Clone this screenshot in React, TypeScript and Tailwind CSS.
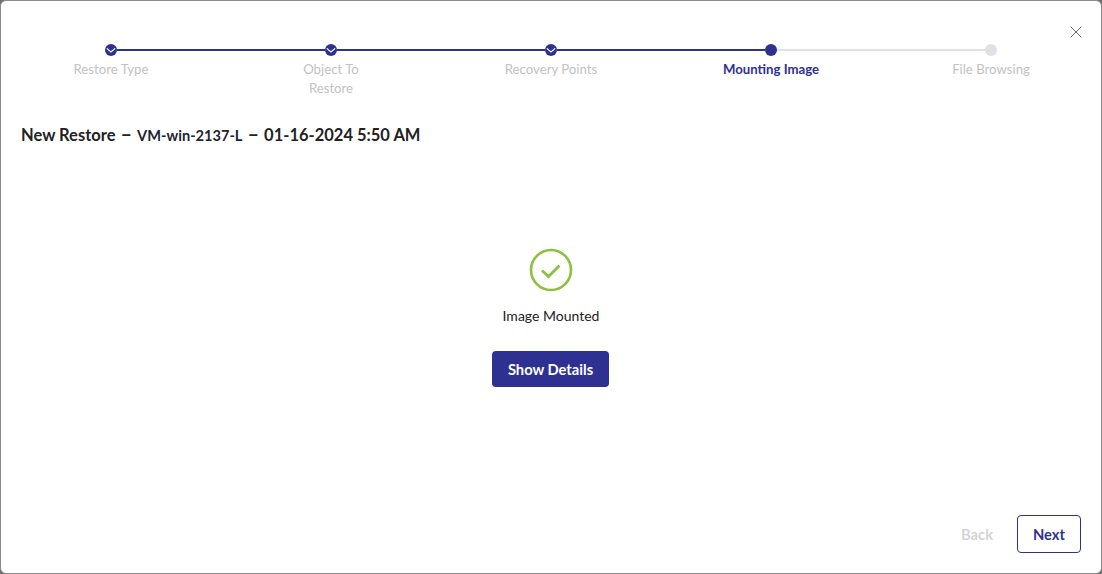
import React from "react";

const font = { fontFamily: '"Lato", "Noto Sans", sans-serif' };

const steps = [
  { label: "Restore Type", state: "done" },
  { label: "Object To Restore", state: "done" },
  { label: "Recovery Points", state: "done" },
  { label: "Mounting Image", state: "active" },
  { label: "File Browsing", state: "todo" },
];

function Dot({ state }: { state: string }) {
  if (state === "todo") return <div className="w-3 h-3 rounded-full bg-[#dfe1e6]" />;
  if (state === "active") return <div className="w-3 h-3 rounded-full bg-[#2e3192]" />;
  return (
    <svg width="12" height="12" viewBox="0 0 12 12" className="block">
      <circle cx="6" cy="6" r="6" fill="#2e3192" />
      <path d="M1.8 4.4 L6 8 L10.2 4.4" fill="none" stroke="#fff" strokeWidth="1.2" />
    </svg>
  );
}

export default function App() {
  return (
    <div className="w-[1102px] h-[574px] bg-[#6e6e6e] overflow-hidden" style={font}>
      <div className="relative w-full h-full bg-white border border-[#8a8a8a] rounded-[6px] flex flex-col">
        <button className="absolute top-[25px] right-[19px] text-[#6b6b6b]">
          <svg width="12" height="12" viewBox="0 0 12 12" className="block">
            <path d="M0.7 0.7 L11.3 11.3 M11.3 0.7 L0.7 11.3" stroke="currentColor" strokeWidth="1" fill="none" />
          </svg>
        </button>

        <div className="flex pt-[43px]">
          {steps.map((s, i) => (
            <div key={s.label} className="relative w-[220px] flex flex-col items-center">
              {i > 0 && (
                <div
                  className={`absolute top-[5px] left-[-104px] w-[208px] h-[2px] ${
                    s.state === "todo" ? "bg-[#dfe1e6]" : "bg-[#2e3192]"
                  }`}
                />
              )}
              <Dot state={s.state} />
              <div
                className={`mt-[4px] w-[120px] text-center text-[13.2px] leading-[19px] whitespace-pre-line ${
                  s.state === "active" ? "text-[#2e3192] font-bold" : "text-[#c2c2c2]"
                }`}
              >
                {s.label === "Object To Restore" ? "Object To\nRestore" : s.label}
              </div>
            </div>
          ))}
        </div>

        <div className="mt-[25px] ml-[20px] h-[24px] text-[16.5px] leading-[24px] font-bold text-[#222222]">
          New Restore <span className="mx-[1px] text-[20px] leading-none">–</span>{" "}
          <span className="text-[14.6px] text-[#1c2430]">VM-win-2137-L</span>{" "}
          <span className="mx-[1px] text-[20px] leading-none">–</span> 01-16-2024 5:50 AM
        </div>

        <div className="mt-[101px] flex flex-col items-center">
          <svg width="44" height="44" viewBox="0 0 44 44" className="block">
            <circle cx="22" cy="22" r="20" fill="none" stroke="#8cc03f" strokeWidth="2.6" />
            <path d="M13 22.5 L19.5 28.5 L30.5 17.5" fill="none" stroke="#8cc03f" strokeWidth="2.8" />
          </svg>
          <div className="mt-[14px] text-[14px] leading-[20px] text-[#222222]">Image Mounted</div>
          <button className="mt-[25px] mr-[1px] w-[117px] h-[36px] rounded-[4px] bg-[#2e3192] text-white text-[14.7px] font-bold">
            Show Details
          </button>
        </div>

        <div className="mt-auto mb-[20px] mr-[20px] flex items-center justify-end gap-[24px]">
          <span className="text-[14.7px] font-bold text-[#d4d4d4]">Back</span>
          <button className="w-[64px] h-[38px] rounded-[4px] border border-[#2e3192] text-[#2e3192] text-[14.7px] font-bold">
            Next
          </button>
        </div>
      </div>
    </div>
  );
}
